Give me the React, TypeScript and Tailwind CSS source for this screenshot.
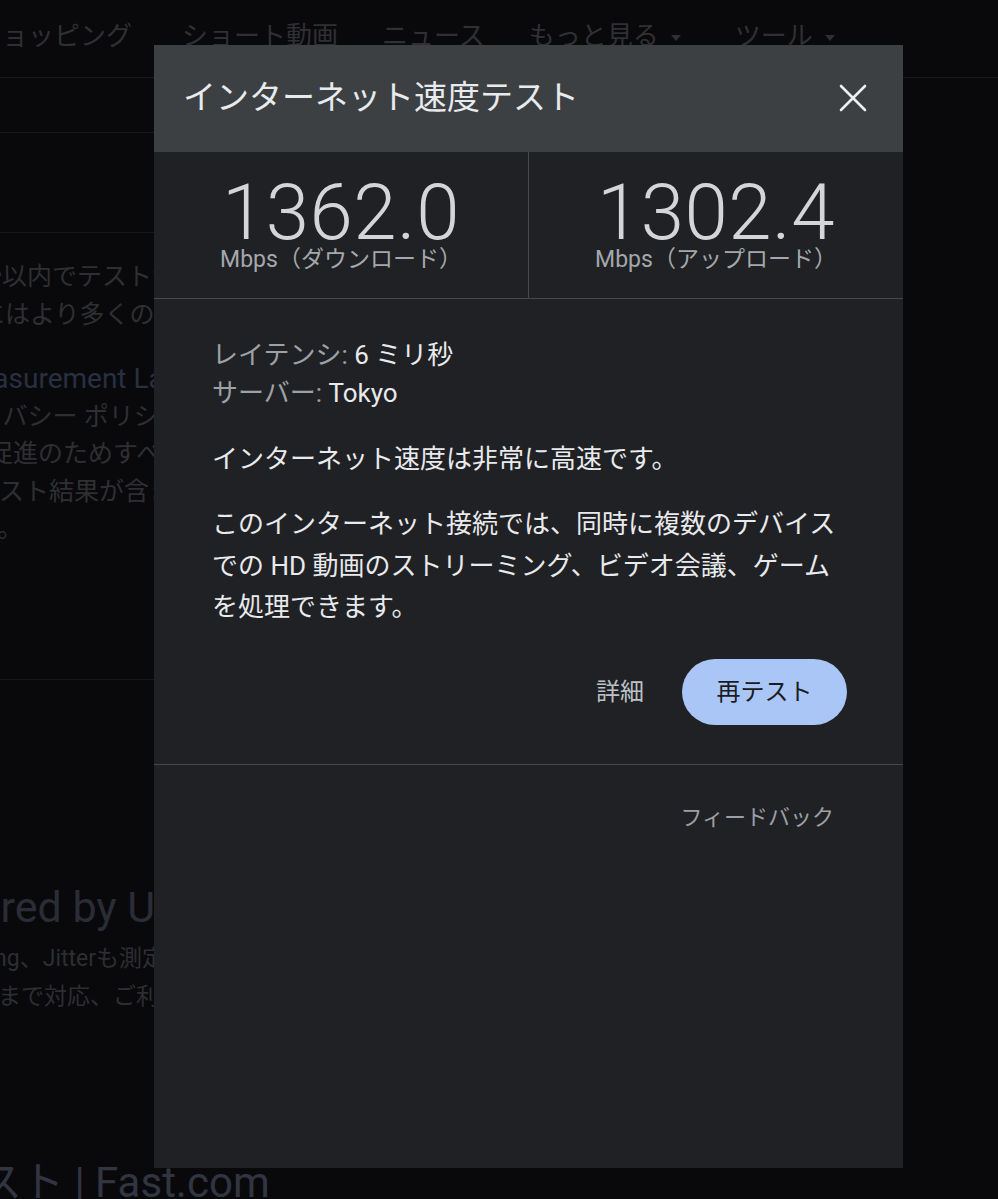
import { useState } from 'react';

const font = { fontFamily: 'Roboto, "Noto Sans CJK JP", sans-serif' };

const navItems = [
  { label: 'ショッピング', caret: false, gap: '-ml-[24px]' },
  { label: 'ショート動画', caret: false, gap: 'ml-[50px]' },
  { label: 'ニュース', caret: false, gap: 'ml-[44px]' },
  { label: 'もっと見る', caret: true, gap: 'ml-[44px]' },
  { label: 'ツール', caret: true, gap: 'ml-[54px]' },
];

const Caret = () => (
  <svg width="10" height="6" viewBox="0 0 10 6" className="ml-[12px] mt-[2px]">
    <path d="M0 0h10L5 6z" fill="#303034" />
  </svg>
);

const CloseIcon = () => (
  <svg width="28" height="28" viewBox="0 0 28 28">
    <path d="M2 2L26 26M26 2L2 26" stroke="#eceef0" strokeWidth="2.6" strokeLinecap="round" />
  </svg>
);

// dimmed search results page that sits behind the dialog
const BackgroundPage = () => (
  <div className="w-full">
    <nav className="flex items-center h-[78px] border-b border-[#19191c] pb-[4px] text-[26px] text-[#303034] whitespace-nowrap">
      {navItems.map((item) => (
        <div key={item.label} className={`flex items-center ${item.gap}`}>
          <span>{item.label}</span>
          {item.caret && <Caret />}
        </div>
      ))}
    </nav>
    <div className="w-[880px] h-[55px] border-b border-[#19191c]" />
    <div className="w-[880px] h-[100px] border-b border-[#19191c]" />

    <section className="w-[880px] h-[447px] border-b border-[#19191c] pt-[25px] text-[25px] leading-[38px] text-[#2f2f33] whitespace-nowrap overflow-hidden">
      <p className="-ml-[23px]">秒以内でテストが完了します。通常、転送されるデータは</p>
      <p className="-ml-[20px]">にはより多くのデータが転送されることがあります。</p>
      <p className="mt-[26px] leading-[37.5px]">
        <span className="block -ml-[46px] text-[28px] text-[#283042]">Measurement Lab（M-Lab）と提携しており</span>
        <span className="block -ml-[22px]">イバシー ポリシーに従って処理されます。</span>
        <span className="block -ml-[12px]">促進のためすべての結果が公開され、公開され</span>
        <span className="block -ml-[26px]">テスト結果が含まれます。IP アドレスなど</span>
        <span className="block -ml-[50px]">ます。</span>
      </p>
    </section>

    <section className="w-[880px] pt-[202px] whitespace-nowrap overflow-hidden">
      <p className="-ml-[106px] text-[43px] leading-[50px] text-[#2a2d37]">Powered by Ultra</p>
      <p className="mt-[8px] -ml-[26px] text-[23px] leading-[38px] text-[#2d2e33]">Ping、Jitterも測定できます</p>
      <p className="-ml-[2px] text-[23px] leading-[38px] text-[#2d2e33]">まで対応、ご利用ください</p>
      <p className="mt-[143px] -ml-[62px] text-[42px] leading-[48px] text-[#313541]">テスト | Fast.com</p>
    </section>
  </div>
);

const SpeedCell = ({ value, label, divider }: { value: string; label: string; divider?: boolean }) => (
  <div className={`flex-1 flex flex-col items-center pt-[23px] ${divider ? 'border-r border-[#45484d]' : ''}`}>
    <div className="text-[78px] leading-[75px] font-light text-[#d3d5d8] tracking-[0.5px]" style={{ fontFamily: 'Roboto, sans-serif' }}>
      {value}
    </div>
    <div className="-mt-[3px] text-[23px] leading-[26px] text-[#a4a8ad] whitespace-nowrap">{label}</div>
  </div>
);

const SpeedTestDialog = () => {
  const [runs, setRuns] = useState(1);

  return (
    <div className="absolute left-[154px] top-[45px] w-[749px] h-[1123px] bg-[#202124] flex flex-col" style={font}>
      <header className="h-[107px] bg-[#3c4043] flex items-center justify-between pl-[29px] pr-[37px]">
        <h2 className="text-[33px] leading-[40px] text-[#e8eaed] pb-[2px]">インターネット速度テスト</h2>
        <button className="mr-[-1px] mb-[2px]" aria-label="close">
          <CloseIcon />
        </button>
      </header>

      <div className="flex h-[147px] border-b border-[#45484d]">
        <SpeedCell value="1362.0" label="Mbps（ダウンロード）" divider />
        <SpeedCell value="1302.4" label="Mbps（アップロード）" />
      </div>

      <div className="pl-[58px] pr-[56px] pt-[37px] pb-[39px] border-b border-[#45484d] text-[26px] text-[#e8eaed]">
        <div className="leading-[38px]">
          <p>
            <span className="text-[#9da1a6]">レイテンシ: </span>6 ミリ秒
          </p>
          <p>
            <span className="text-[#9da1a6]">サーバー: </span>Tokyo
          </p>
        </div>
        <p className="mt-[28px] leading-[38px]">インターネット速度は非常に高速です。</p>
        <p className="mt-[26px] leading-[41.5px] whitespace-nowrap">
          このインターネット接続では、同時に複数のデバイス
          <br />
          での HD 動画のストリーミング、ビデオ会議、ゲーム
          <br />
          を処理できます。
        </p>
        <div className="mt-[30px] flex items-center justify-end gap-[38px]">
          <button className="text-[24px] text-[#bdc1c6]">詳細</button>
          <button
            onClick={() => setRuns(runs + 1)}
            className="w-[165px] h-[66px] rounded-full bg-[#aac6f6] text-[24px] text-[#1b1c1f]"
          >
            再テスト
          </button>
        </div>
      </div>

      <div className="flex justify-end pr-[69px] pt-[38px]">
        <button className="text-[22px] leading-[30px] text-[#9aa0a6]">フィードバック</button>
      </div>
    </div>
  );
};

export default function App() {
  return (
    <div className="relative w-[998px] h-[1199px] overflow-hidden bg-[#09090b]" style={font}>
      <BackgroundPage />
      <SpeedTestDialog />
    </div>
  );
}
